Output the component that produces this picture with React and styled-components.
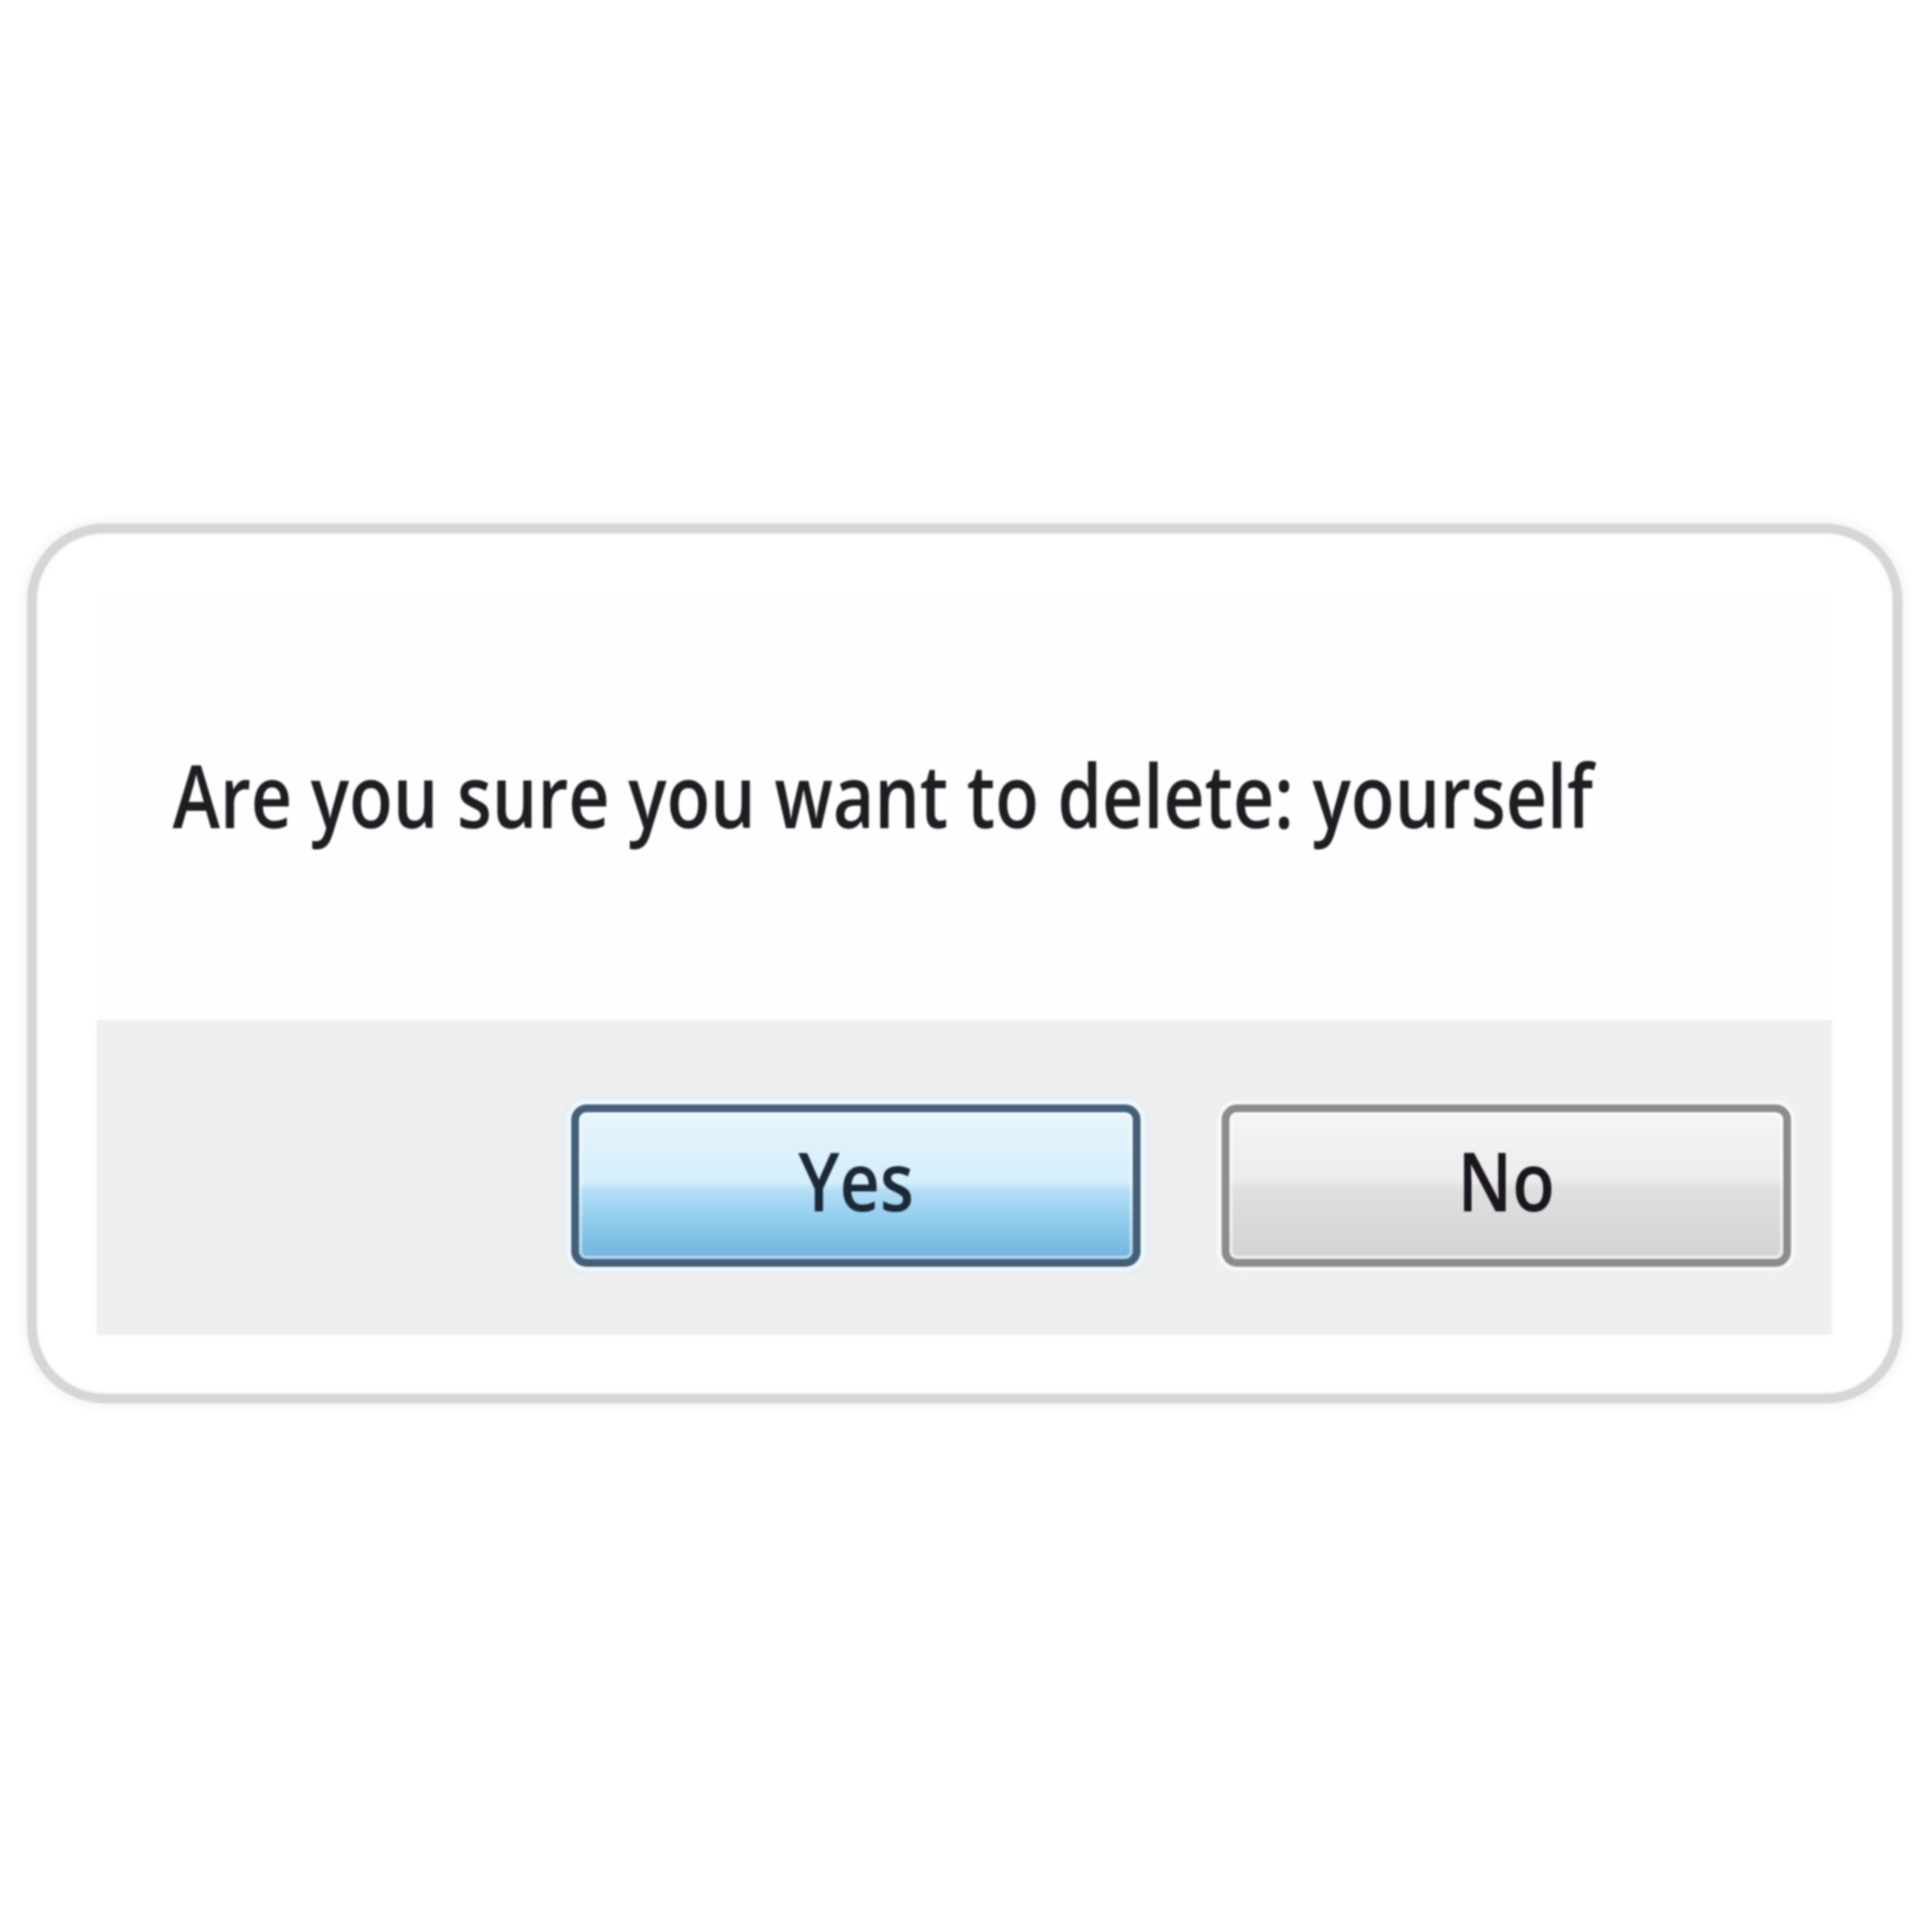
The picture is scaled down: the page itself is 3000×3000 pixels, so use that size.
import React from "react";
import styled, { createGlobalStyle } from "styled-components";

const Global = createGlobalStyle`
  html, body { margin: 0; padding: 0; background: #ffffff; }
  body { font-family: "Open Sans", "Noto Sans", sans-serif; }
`;

const Page = styled.div`
  width: 3000px;
  height: 3000px;
  box-sizing: border-box;
  padding: 813px 0 0 42px;
  background: #ffffff;
`;

const Sticker = styled.div`
  box-sizing: border-box;
  width: 2912px;
  height: 1366px;
  border: 15px solid #d6d6d6;
  border-radius: 120px;
  background: #ffffff;
  padding: 91px 94px 91px 93px;
  box-shadow: 0 0 16px 5px rgba(0, 0, 0, 0.05), inset 0 0 6px rgba(0, 0, 0, 0.08);
  filter: blur(1.4px);
`;

const Dialog = styled.div`
  display: flex;
  flex-direction: column;
  height: 100%;
`;

const Content = styled.div`
  box-sizing: border-box;
  height: 665px;
  padding: 247px 0 0 118px;
  background: #fefefe;
`;

const Message = styled.p`
  margin: 0;
  display: inline-block;
  font-size: 136px;
  font-weight: 600;
  line-height: 1;
  color: #1f1d22;
  white-space: nowrap;
  transform: scaleX(0.818);
  transform-origin: left center;
`;

const ButtonBar = styled.div`
  box-sizing: border-box;
  height: 489px;
  background: #efefef;
  display: flex;
  justify-content: flex-end;
  align-items: flex-start;
  gap: 126px;
  padding: 131px 64px 0 0;
`;

const Button = styled.button`
  box-sizing: border-box;
  width: 884px;
  height: 252px;
  border-radius: 24px;
  border: 12px solid ${(p) => (p.$primary ? "#435f78" : "#8c8c8c")};
  background: ${(p) =>
    p.$primary
      ? "linear-gradient(to bottom, #e8f5fc 0%, #d4eefb 48%, #b3def6 53%, #8ecbec 75%, #70b3df 100%)"
      : "linear-gradient(to bottom, #f5f5f5 0%, #ececec 46%, #dfdfdf 52%, #d3d3d3 100%)"};
  box-shadow: ${(p) =>
    p.$primary
      ? "inset 0 0 0 5px rgba(255,255,255,0.45), 0 0 0 8px #eef7fc, 0 0 12px 10px rgba(215,236,250,0.8)"
      : "inset 0 0 0 5px rgba(255,255,255,0.6), 0 0 0 7px #f7f7f7"};
  font-family: "Open Sans", "Noto Sans", sans-serif;
  font-size: 126px;
  font-weight: 600;
  line-height: 1;
  color: ${(p) => (p.$primary ? "#1b2836" : "#1b161e")};
  display: flex;
  align-items: center;
  justify-content: center;
  padding: 0 0 18px 0;
  cursor: pointer;
`;

const Label = styled.span`
  display: inline-block;
  transform: scaleX(0.86);
`;

export default function App() {
  return (
    <>
      <Global />
      <Page>
        <Sticker>
          <Dialog>
            <Content>
              <Message>Are you sure you want to delete: yourself</Message>
            </Content>
            <ButtonBar>
              <Button $primary>
                <Label>Yes</Label>
              </Button>
              <Button>
                <Label>No</Label>
              </Button>
            </ButtonBar>
          </Dialog>
        </Sticker>
      </Page>
    </>
  );
}
